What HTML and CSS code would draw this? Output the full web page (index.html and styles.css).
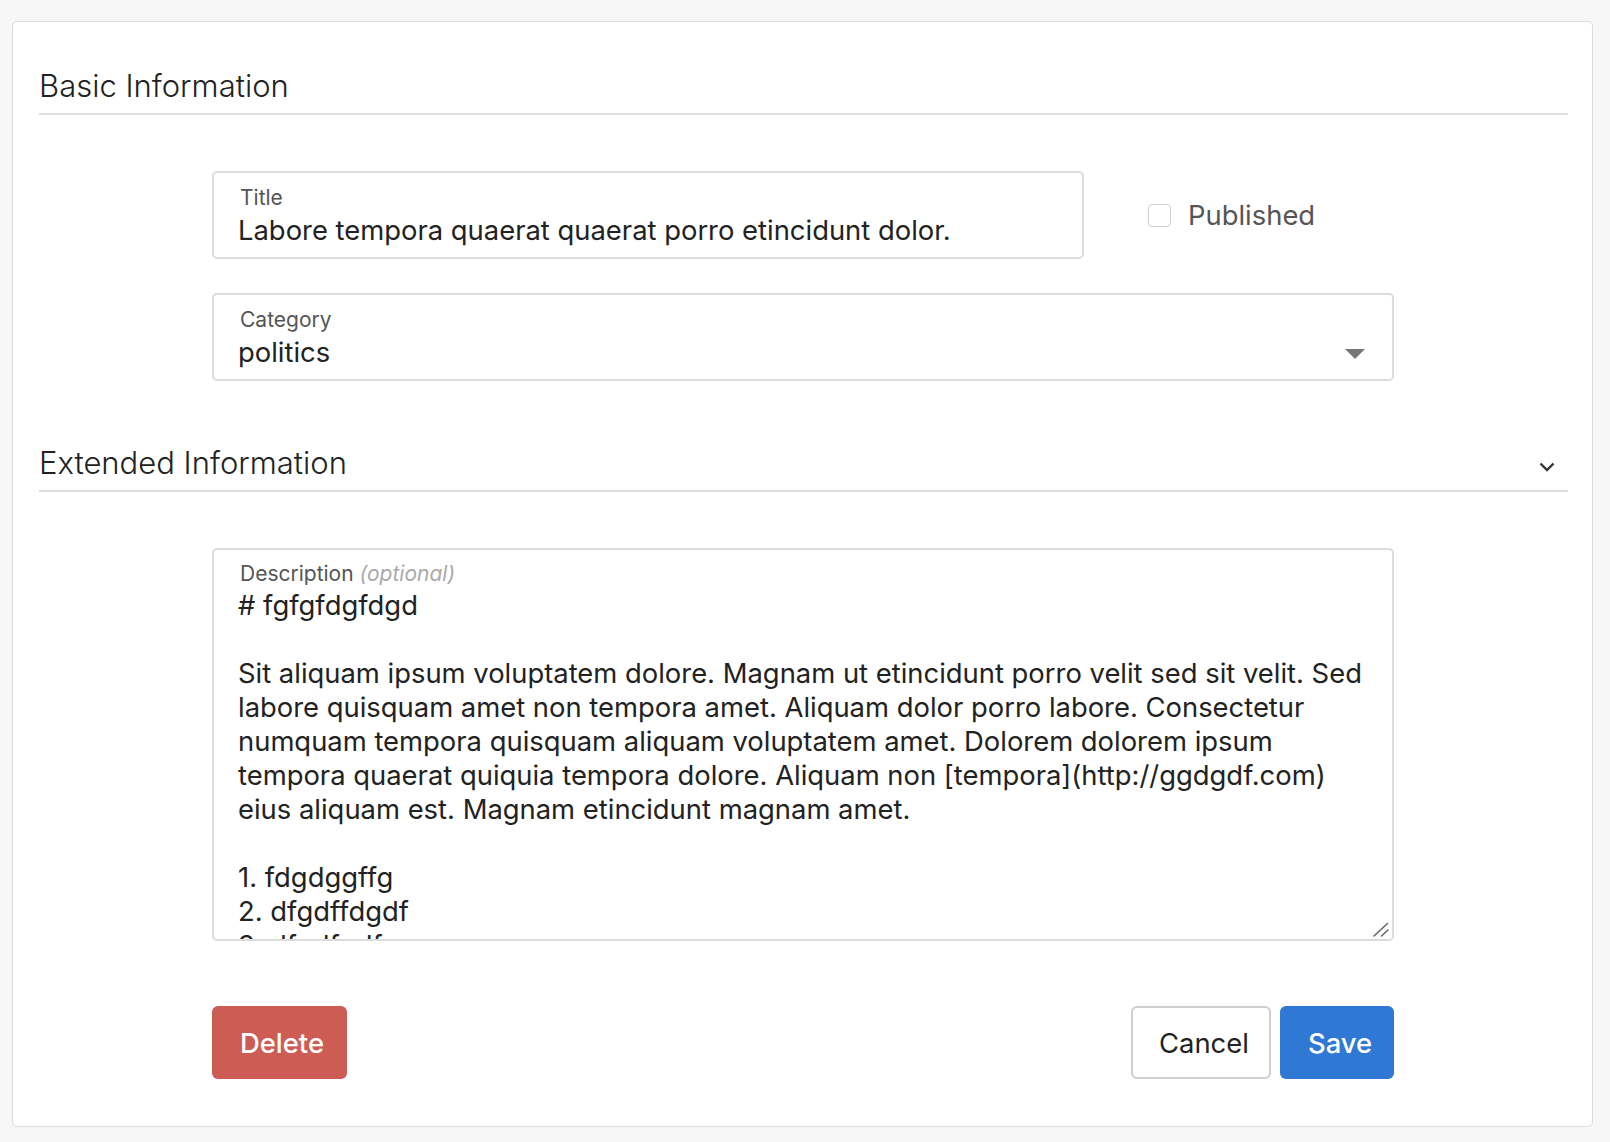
FILE: index.html
```html
<!DOCTYPE html>
<html lang="en">
<head>
<meta charset="utf-8">
<title>Edit Article</title>
<link rel="stylesheet" href="styles.css">
</head>
<body>
<div class="card">
  <section class="section">
    <h2 class="section-title">Basic Information</h2>
    <div class="fields">
      <div class="row">
        <div class="field field-title">
          <label class="field-label">Title</label>
          <input class="field-input" type="text" value="Labore tempora quaerat quaerat porro etincidunt dolor.">
        </div>
        <label class="check">
          <span class="check-box"></span>
          <span class="check-text">Published</span>
        </label>
      </div>
      <div class="field field-select">
        <label class="field-label">Category</label>
        <div class="select-value">politics</div>
        <svg class="select-caret" width="20" height="10" viewBox="0 0 20 10"><path d="M0 0H20L10 10Z" fill="#777"/></svg>
      </div>
    </div>
  </section>
  <section class="section section-ext">
    <h2 class="section-title section-title-toggle">
      <span>Extended Information</span>
      <svg class="chevron" width="16" height="10" viewBox="0 0 16 10"><path d="M1.5 1.5L8 8L14.5 1.5" fill="none" stroke="#333" stroke-width="2.4"/></svg>
    </h2>
    <div class="fields">
      <div class="field field-textarea">
        <label class="field-label">Description <em class="optional">(optional)</em></label>
        <textarea class="field-area"># fgfgfdgfdgd

Sit aliquam ipsum voluptatem dolore. Magnam ut etincidunt porro velit sed sit velit. Sed
labore quisquam amet non tempora amet. Aliquam dolor porro labore. Consectetur
numquam tempora quisquam aliquam voluptatem amet. Dolorem dolorem ipsum
tempora quaerat quiquia tempora dolore. Aliquam non [tempora](http://ggdgdf.com)
eius aliquam est. Magnam etincidunt magnam amet.

1. fdgdggffg
2. dfgdffdgdf
3. dfgdfgdfg</textarea>
        <svg class="grip" width="16" height="15" viewBox="0 0 16 15"><path d="M1 14L14.5 1.5M8.5 14L15 8" fill="none" stroke="#666" stroke-width="1.6" stroke-linecap="round"/></svg>
      </div>
      <div class="actions">
        <button class="btn btn-delete" type="button">Delete</button>
        <div class="actions-right">
          <button class="btn btn-cancel" type="button">Cancel</button>
          <button class="btn btn-save" type="button">Save</button>
        </div>
      </div>
    </div>
  </section>
</div>
</body>
</html>
```
FILE: styles.css
```css
html, body {
  margin: 0;
  padding: 0;
}
body {
  background: #f7f7f7;
  font-family: "Inter", "Noto Sans", sans-serif;
  color: #222;
  padding: 21px 17px 16px 12px;
}
.card {
  background: #fff;
  border: 1px solid #dcdcdc;
  border-radius: 5px;
  padding: 44px 24px 47px 26px;
}
.section-title {
  margin: 0;
  font-size: 31px;
  font-weight: 300;
  line-height: 40px;
  padding-bottom: 7px;
  border-bottom: 2px solid #dedede;
  color: #222;
}
.section-title-toggle {
  display: flex;
  justify-content: space-between;
  align-items: center;
}
.chevron {
  margin-right: 13px;
  margin-top: 8px;
}
.fields {
  margin-left: 173px;
  width: 1182px;
  padding-top: 56px;
}
.section-ext {
  margin-top: 62px;
}
.row {
  display: flex;
  align-items: center;
}
.field {
  border: 2px solid #dcdcdc;
  border-radius: 5px;
  padding: 13px 24px 10px 24px;
  display: flex;
  flex-direction: column;
  position: relative;
  box-sizing: border-box;
}
.field-title {
  width: 872px;
  height: 88px;
}
.field-label {
  font-size: 21px;
  line-height: 24px;
  color: #555;
  padding-left: 2px;
}
.optional {
  color: #aaa;
  font-style: italic;
  font-weight: 400;
}
.field-input {
  border: 0;
  outline: 0;
  padding: 0;
  margin: 3px 0 0 0;
  font: inherit;
  font-size: 27.4px;
  line-height: 34px;
  height: 34px;
  color: #222;
  background: transparent;
}
.check {
  display: flex;
  align-items: center;
  margin-left: 64px;
  gap: 17px;
}
.check-box {
  width: 21px;
  height: 21px;
  border: 1.5px solid #cfcfcf;
  border-radius: 4px;
  background: #fff;
}
.check-text {
  font-size: 27.4px;
  color: #555;
}
.field-select {
  margin-top: 34px;
  height: 88px;
}
.select-value {
  font-size: 27.4px;
  line-height: 34px;
  margin-top: 3px;
}
.select-caret {
  position: absolute;
  right: 27px;
  top: 54px;
}
.field-textarea {
  height: 393px;
  padding: 12px 0 0 24px;
}
.field-area {
  flex: 1;
  border: 0;
  outline: 0;
  margin: 0;
  padding: 2px 0 0 0;
  font: inherit;
  font-size: 27.4px;
  line-height: 34px;
  color: #222;
  white-space: pre;
  overflow: hidden;
  resize: none;
  background: transparent;
}
.grip {
  position: absolute;
  right: 3px;
  bottom: 2px;
}
.actions {
  display: flex;
  justify-content: space-between;
  margin-top: 65px;
}
.actions-right {
  display: flex;
  gap: 9px;
}
.btn {
  font: inherit;
  font-size: 27.4px;
  font-weight: 500;
  height: 73px;
  border-radius: 6px;
  padding: 0 26px;
  border: 2px solid transparent;
  cursor: pointer;
}
.btn-delete {
  background: #cd5c55;
  color: #fff;
  width: 135px;
}
.btn-cancel {
  background: #fff;
  border-color: #cfcfcf;
  color: #222;
  font-weight: 400;
  width: 140px;
}
.btn-save {
  background: #2f78d4;
  color: #fff;
  width: 114px;
}
```
